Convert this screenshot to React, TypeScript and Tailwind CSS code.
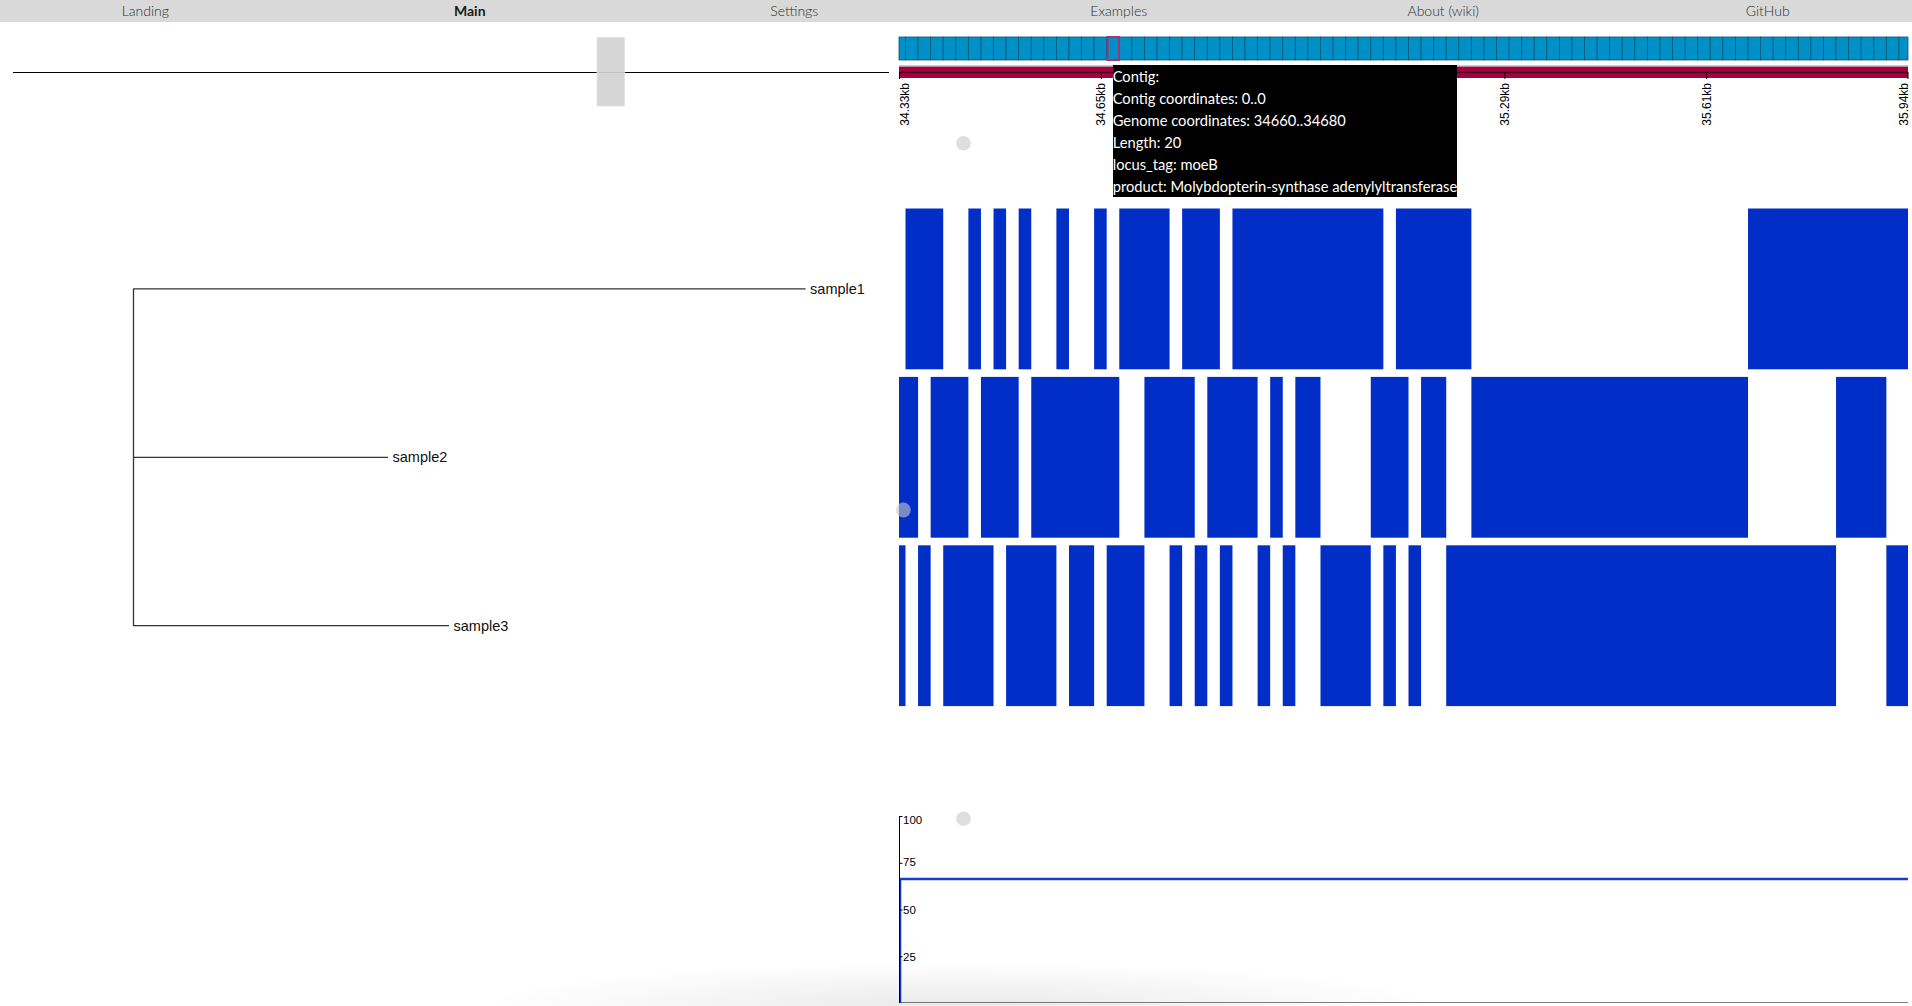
const NAV = ['Landing', 'Main', 'Settings', 'Examples', 'About (wiki)', 'GitHub'];

const W = 1009;
const BIN0 = 6.5;
const BW = 12.575;
const bx = (k: number) => Math.max(0, BIN0 + k * BW);
const bxe = (k: number) => Math.min(W, BIN0 + (k + 1) * BW);

const ROWS: [number, number][][] = [
  [[0, 2], [5, 5], [7, 7], [9, 9], [12, 12], [15, 15], [17, 20], [22, 24], [26, 37], [39, 44], [67, 79]],
  [[-1, 0], [2, 4], [6, 8], [10, 16], [19, 22], [24, 27], [29, 29], [31, 32], [37, 39], [41, 42], [45, 66], [74, 77]],
  [[-1, -1], [1, 1], [3, 6], [8, 11], [13, 14], [16, 18], [21, 21], [23, 23], [25, 25], [28, 28], [30, 30], [33, 36], [38, 38], [40, 40], [43, 73], [78, 79]],
];

const TICKS = [
  { x: 0, label: '34.33kb', off: 9.5 },
  { x: 201.8, label: '34.65kb', off: 4.3 },
  { x: 403.6, label: '34.97kb', off: 4.3 },
  { x: 605.4, label: '35.29kb', off: 4.3 },
  { x: 807.2, label: '35.61kb', off: 4.3 },
  { x: 1008.5, label: '35.94kb', off: 0 },
];

const TOOLTIP = [
  'Contig:',
  'Contig coordinates: 0..0',
  'Genome coordinates: 34660..34680',
  'Length: 20',
  'locus_tag: moeB',
  'product: Molybdopterin-synthase adenylyltransferase',
];

const LEAVES = [
  { name: 'sample1', y: 88.9, x: 805.6 },
  { name: 'sample2', y: 257.3, x: 388 },
  { name: 'sample3', y: 425.7, x: 449 },
];

const dot = 'rgba(200,200,200,0.6)';

function Nav() {
  return (
    <nav className="h-[22px] bg-[#d9d9d9] overflow-hidden font-['Lato',sans-serif] text-[14px] leading-[22px]">
      <div className="flex ml-[-17px]">
        {NAV.map((n) => (
          <div
            key={n}
            className={`w-[324.5px] shrink-0 text-center ${n === 'Main' ? 'font-bold text-[#1a1a1a]' : 'font-light text-[#2e2e2e]'}`}
          >
            {n}
          </div>
        ))}
      </div>
    </nav>
  );
}

function TopTrack() {
  return (
    <svg width={W} height={178} className="block overflow-visible">
      {Array.from({ length: 81 }, (_, i) => i - 1).map((k) => (
        <rect key={k} x={bx(k)} y={15} width={bxe(k) - bx(k)} height={23} fill="#0090c8" stroke="#0b5874" strokeWidth={0.8} />
      ))}
      <rect x={bx(16) + 1} y={15} width={BW - 1.5} height={23} fill="none" stroke="#a3367a" strokeWidth={2} />
      <rect x={0} y={44} width={W} height={12} fill="#a6003d" />
      <line x1={0} x2={W} y1={44} y2={44} stroke="#c9b4bb" strokeWidth={1.5} />
      <line x1={0} x2={W} y1={50.5} y2={50.5} stroke="#000" strokeOpacity={0.55} strokeWidth={1.5} />
      {TICKS.map((t) => (
        <g key={t.label}>
          <line x1={t.x + 0.5} x2={t.x + 0.5} y1={50} y2={57} stroke="#000" />
          <text
            transform={`translate(${t.x + t.off},61) rotate(-90)`}
            textAnchor="end"
            fontFamily="'Liberation Sans', Arial, sans-serif"
            fontSize={12}
            fill="#000"
          >
            {t.label}
          </text>
        </g>
      ))}
      <circle cx={64.5} cy={121.3} r={7.3} fill={dot} />
    </svg>
  );
}

function Heatmap() {
  return (
    <svg width={W} height={515} className="block overflow-visible">
      {ROWS.map((row, r) =>
        row.map(([a, b]) => (
          <rect key={`${r}-${a}`} x={bx(a)} y={8.5 + r * 168.4} width={bxe(b) - bx(a)} height={160.8} fill="#012ec7" />
        )),
      )}
      <circle cx={4.4} cy={310} r={7.4} fill={dot} />
    </svg>
  );
}

function Coverage() {
  const ys = [
    { v: '100', y: 101.5, ly: 104.5 },
    { v: '75', y: 148.3, ly: 147.3 },
    { v: '50', y: 195, ly: 195 },
    { v: '25', y: 241.7, ly: 241.7 },
  ];
  return (
    <svg width={W} height={291} className="block">
      <line x1={0} x2={W} y1={287.5} y2={287.5} stroke="#808080" strokeWidth={1} />
      <path d={`M1,288 L1,164 L${W},164`} fill="none" stroke="#1a3bd0" strokeWidth={2.6} />
      <line x1={0.5} x2={0.5} y1={101.5} y2={288} stroke="#000" />
      {ys.map((t) => (
        <g key={t.v}>
          <line x1={0} x2={3.5} y1={t.y} y2={t.y} stroke="#000" />
          <text x={4} y={t.ly} dy="0.35em" fontFamily="'Liberation Sans', Arial, sans-serif" fontSize={11.5} fill="#000">
            {t.v}
          </text>
        </g>
      ))}
      <circle cx={64.5} cy={103.7} r={7.3} fill={dot} />
    </svg>
  );
}

function Tree() {
  return (
    <svg width={899} height={515} className="block">
      <line x1={133.5} x2={133.5} y1={LEAVES[0].y} y2={LEAVES[2].y} stroke="#333" strokeWidth={1.3} />
      {LEAVES.map((l) => (
        <g key={l.name}>
          <line x1={133} x2={l.x} y1={l.y} y2={l.y} stroke="#333" strokeWidth={1.3} />
          <text x={l.x + 4.5} y={l.y} dy="0.35em" fontFamily="'Liberation Sans', Arial, sans-serif" fontSize={14.5} fill="#111">
            {l.name}
          </text>
        </g>
      ))}
    </svg>
  );
}

export default function App() {
  return (
    <div className="relative w-[1912px] h-[1006px] overflow-hidden bg-white">
      <Nav />
      <div className="flex">
        <div className="w-[899px] shrink-0">
          <svg width={899} height={178} className="block">
            <line x1={13} x2={889} y1={50.5} y2={50.5} stroke="#000" strokeWidth={1.2} />
            <rect x={597} y={15.3} width={27.5} height={68.7} fill="#d3d3d3" fillOpacity={0.92} stroke="#e4e4e4" strokeWidth={0.8} />
          </svg>
          <Tree />
        </div>
        <div className="relative w-[1009px] shrink-0">
          <TopTrack />
          <Heatmap />
          <Coverage />
          <div className="absolute left-[213.7px] top-[43px] bg-black text-white font-['Lato',sans-serif] text-[14.7px] leading-[22px] whitespace-nowrap">
            {TOOLTIP.map((t) => (
              <div key={t}>{t}</div>
            ))}
          </div>
        </div>
      </div>
      <div className="pointer-events-none absolute bottom-0 left-[480px] w-[960px] h-[44px] bg-[radial-gradient(ellipse_50%_100%_at_50%_100%,rgba(0,0,0,0.085),transparent)]" />
    </div>
  );
}
